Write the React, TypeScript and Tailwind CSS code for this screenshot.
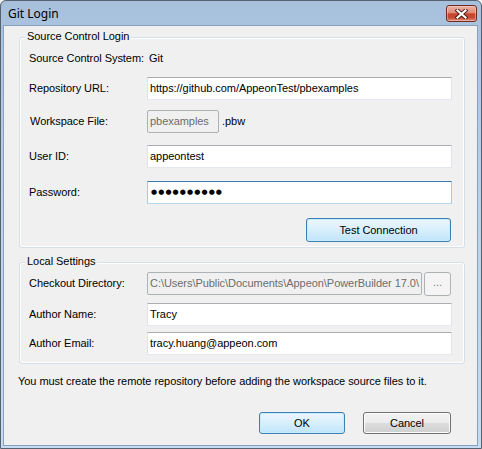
import type { ReactNode } from "react";

const ui = "font-['Liberation_Sans',Arial,sans-serif] text-[11px] leading-[13px] tracking-[-0.05px] text-black";

function CloseGlyph() {
  return (
    <svg width="13" height="10" viewBox="0 0 13 10" aria-hidden="true">
      <path d="M2.5 1.5 L10.5 8.5 M10.5 1.5 L2.5 8.5" stroke="#4a1a12" strokeWidth="4" strokeLinecap="square" />
      <path d="M2.5 1.5 L10.5 8.5 M10.5 1.5 L2.5 8.5" stroke="#ffffff" strokeWidth="2.2" strokeLinecap="square" />
    </svg>
  );
}

function GroupBox({ title, className, children }: { title: string; className?: string; children: ReactNode }) {
  return (
    <div
      className={`relative ml-[15px] mr-[12px] flex flex-col rounded-[3px] border border-[#d5dfe5] shadow-[inset_0_0_0_1px_#ffffff] pl-[9px] pr-[12px] ${className ?? ""}`}
    >
      <span className="absolute left-[5px] top-[-8px] bg-[#f0f0f0] px-[2px]">{title}</span>
      {children}
    </div>
  );
}

function Row({ label, className, labelClass, children }: { label: string; className?: string; labelClass?: string; children: ReactNode }) {
  return (
    <div className={`flex h-[23px] items-center ${className ?? ""}`}>
      <span className={`w-[118px] shrink-0 ${labelClass ?? ""}`}>{label}</span>
      {children}
    </div>
  );
}

function TextBox({ value }: { value: string }) {
  return (
    <div className="flex h-[23px] w-[305px] items-center border border-x-[#e2e3ea] border-b-[#e3e9ef] border-t-[#abadb3] bg-white pl-[2px]">
      {value}
    </div>
  );
}

function DisabledBox({ value, width }: { value: string; width: string }) {
  return (
    <div
      className={`flex h-[23px] ${width} items-center overflow-hidden whitespace-nowrap rounded-[2px] border border-[#adb2b5] bg-[#f0f0f0] pl-[2px] text-[#6d6d6d]`}
    >
      {value}
    </div>
  );
}

function DefaultButton({ children, className }: { children: ReactNode; className?: string }) {
  return (
    <button
      type="button"
      className={`flex items-center justify-center rounded-[3px] border border-[#3c7fb1] bg-gradient-to-b from-[#ecf7fd] via-[#d8effc] to-[#bfe5fb] shadow-[inset_0_0_0_1px_#c9ecfd] ${className ?? ""}`}
    >
      {children}
    </button>
  );
}

export default function App() {
  return (
    <div className={`h-[449px] w-[482px] bg-[#f0f0f0] ${ui}`}>
      <div className="flex h-full w-full flex-col rounded-t-[6px] border border-[#56626f] bg-gradient-to-b from-[#a7c0dc] via-[#bcd3ec] to-[#c5dbf1]">
        {/* title bar */}
        <div className="flex h-[24px] shrink-0 justify-between pl-[7px] pr-[4px]">
          <span className="pt-[5px] font-['Noto_Sans',sans-serif] text-[12px] leading-[16px] tracking-normal text-black">
            Git Login
          </span>
          <button
            type="button"
            className="mt-[4px] flex h-[17px] w-[31px] items-center justify-center rounded-[3px] border border-[#6e2c22] bg-[linear-gradient(to_bottom,#ebb3a6_0%,#df8b79_45%,#c8452f_52%,#c64a33_78%,#e2917a_100%)] shadow-[inset_0_0_0_1px_rgba(255,220,210,0.45)]"
          >
            <CloseGlyph />
          </button>
        </div>

        {/* client area */}
        <div className="mb-[2px] ml-[2px] mr-[3px] flex flex-1 flex-col border border-[#86a0bf] bg-[#f0f0f0] pt-[11px]">
          <GroupBox title="Source Control Login" className="h-[211px] pt-[9px] pb-[5px]">
            <Row label="Source Control System:">
              <span className="pl-[2px]">Git</span>
            </Row>
            <Row label="Repository URL:" className="mt-[7px]">
              <TextBox value="https://github.com/AppeonTest/pbexamples" />
            </Row>
            <Row label="Workspace File:" className="mt-[10px]" labelClass="pl-[1px]">
              <DisabledBox value="pbexamples" width="w-[72px]" />
              <span className="pl-[3px]">.pbw</span>
            </Row>
            <Row label="User ID:" className="mt-[12px]">
              <TextBox value="appeontest" />
            </Row>
            <Row label="Password:" className="mt-[13px]">
              <div className="flex h-[23px] w-[305px] items-center border border-x-[#a4c9e3] border-b-[#b7d9ed] border-t-[#3d7bad] bg-white pl-[3px] font-['DejaVu_Sans',sans-serif] text-[7px] tracking-[1.1px]">
                ●●●●●●●●●●
              </div>
            </Row>
            <div className="mt-[14px] flex justify-end pr-[1px]">
              <DefaultButton className="h-[24px] w-[145px]">Test Connection</DefaultButton>
            </div>
          </GroupBox>

          <GroupBox title="Local Settings" className="mt-[14px] h-[102px] pt-[9px] pb-[8px]">
            <Row label="Checkout Directory:">
              <DisabledBox value="C:\Users\Public\Documents\Appeon\PowerBuilder 17.0\" width="w-[275px]" />
              <button
                type="button"
                className="ml-[2px] flex h-[24px] w-[27px] items-center justify-center rounded-[3px] border border-[#adb2b5] bg-[#f4f4f4] pb-[3px] text-[#838383]"
              >
                ...
              </button>
            </Row>
            <Row label="Author Name:" className="mt-[8px]">
              <TextBox value="Tracy" />
            </Row>
            <Row label="Author Email:" className="mt-[6px]">
              <TextBox value="tracy.huang@appeon.com" />
            </Row>
          </GroupBox>

          <p className="mt-[11px] pl-[14px]">
            You must create the remote repository before adding the workspace source files to it.
          </p>

          <div className="mt-[24px] flex justify-end gap-[18px] pr-[26px]">
            <DefaultButton className="h-[22px] w-[86px]">OK</DefaultButton>
            <button
              type="button"
              className="flex h-[22px] w-[88px] items-center justify-center rounded-[3px] border border-[#707070] bg-[linear-gradient(to_bottom,#f2f2f2_0%,#ebebeb_50%,#dddddd_51%,#cfcfcf_100%)] shadow-[inset_0_0_0_1px_#fcfcfc]"
            >
              Cancel
            </button>
          </div>
        </div>
      </div>
    </div>
  );
}
